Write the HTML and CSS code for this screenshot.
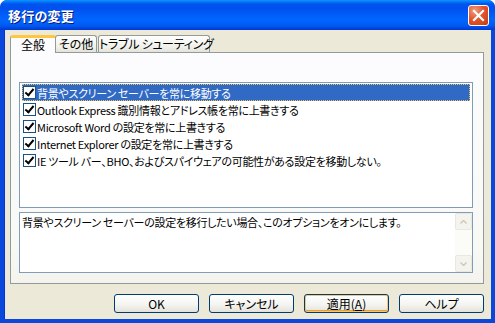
FILE: index.html
```html
<!DOCTYPE html>
<html lang="ja">
<head>
<meta charset="utf-8">
<link rel="stylesheet" href="styles.css">
</head>
<body>
<div class="window">
  <div class="titlebar">
    <span class="title">移行の変更</span>
    <button class="close" aria-label="閉じる">
      <svg width="13" height="13" viewBox="0 0 13 13"><path d="M2 2 L11 11 M11 2 L2 11" stroke="#fff" stroke-width="2.2" stroke-linecap="square"/></svg>
    </button>
  </div>
  <div class="client">
    <div class="tabs">
      <div class="tab active">全般</div>
      <div class="tab">その他</div>
      <div class="tab">トラブル シューティング</div>
    </div>
    <div class="panel">
      <ul class="list">
        <li class="item selected"><span class="cb checked"></span><span class="label">背景やスクリーン セーバーを常に移動する</span></li>
        <li class="item"><span class="cb checked"></span><span class="label">Outlook Express 識別情報とアドレス帳を常に上書きする</span></li>
        <li class="item"><span class="cb checked"></span><span class="label">Microsoft Word の設定を常に上書きする</span></li>
        <li class="item"><span class="cb checked"></span><span class="label">Internet Explorer の設定を常に上書きする</span></li>
        <li class="item"><span class="cb checked"></span><span class="label">IE ツール バー、BHO、およびスパイウェアの可能性がある設定を移動しない。</span></li>
      </ul>
      <div class="desc">
        <p class="desc-text">背景やスクリーン セーバーの設定を移行したい場合、このオプションをオンにします。</p>
        <div class="vscroll">
          <div class="sbtn"><svg width="7" height="4" viewBox="0 0 7 4"><path d="M0.5 3.5 L3.5 0.5 L6.5 3.5" fill="none" stroke="#C9C7BA" stroke-width="1.3"/></svg></div>
          <div class="strack"></div>
          <div class="sbtn"><svg width="7" height="4" viewBox="0 0 7 4"><path d="M0.5 0.5 L3.5 3.5 L6.5 0.5" fill="none" stroke="#C9C7BA" stroke-width="1.3"/></svg></div>
        </div>
      </div>
    </div>
    <div class="buttons">
      <button class="btn">OK</button>
      <button class="btn">キャンセル</button>
      <button class="btn default">適用(<u>A</u>)</button>
      <button class="btn">ヘルプ</button>
    </div>
  </div>
</div>
</body>
</html>
```
FILE: styles.css
```css
* { box-sizing: border-box; }
html, body { margin: 0; padding: 0; }
body {
  width: 495px;
  height: 323px;
  overflow: hidden;
  font-family: "Noto Sans CJK JP", "Noto Sans", sans-serif;
  font-size: 11px;
  font-feature-settings: "palt" 1;
  color: #000;
}
.window {
  width: 495px;
  height: 323px;
  display: flex;
  flex-direction: column;
  background: #0A48DB;
  border-radius: 7px 7px 0 0;
  overflow: hidden;
}
.titlebar {
  height: 30px;
  flex: none;
  display: flex;
  align-items: center;
  justify-content: space-between;
  padding: 0 6px 0 8px;
  background: linear-gradient(to bottom, #0997FF 0px, #0053EE 4px, #0050EE 8px, #0066FF 20px, #0058F0 26px, #003DD7 29px, #003DD7 30px);
  border-radius: 7px 7px 0 0;
}
.title {
  color: #fff;
  font-weight: bold;
  font-size: 13px;
  letter-spacing: 0.2px;
  font-feature-settings: normal;
  text-shadow: 1px 1px 0 #0A1883;
  margin-top: 1px;
}
.close {
  width: 21px;
  height: 21px;
  padding: 0;
  border: 1px solid #fff;
  border-radius: 3px;
  background: radial-gradient(circle at 30% 25%, #F09C7E 0%, #E2562D 45%, #C83A12 100%);
  display: flex;
  align-items: center;
  justify-content: center;
  margin-top: 1px;
}
.client {
  flex: 1;
  margin: 0 4px 4px 4px;
  background: #ECE9D8;
  border-left: 1px solid #0831D9;
  display: flex;
  flex-direction: column;
  padding: 5px 6px 0 5px;
}
.tabs {
  display: flex;
  height: 17px;
  align-items: flex-end;
  position: relative;
  z-index: 1;
}
.tab {
  height: 17px;
  padding: 0;
  border: 1px solid #919B9C;
  border-bottom: none;
  border-radius: 3px 3px 0 0;
  background: linear-gradient(to bottom, #FFFFFF, #F0F0EA 70%, #E4E2D9);
  line-height: 15px;
  white-space: nowrap;
  font-size: 12px;
  text-align: center;
}
.tab.active {
  width: 46px;
  height: 18px;
  background: #FCFCFE;
  border-top: 3px solid #FFC73C;
  line-height: 14px;
  margin-right: -1px;
  position: relative;
  margin-bottom: -1px;
  z-index: 2;
}
.tab:nth-child(2) { width: 42px; }
.tab:nth-child(3) { width: 112px; margin-left: 1px; letter-spacing: -0.3px; }
.panel {
  width: 474px;
  height: 232px;
  border: 1px solid #919B9C;
  background: linear-gradient(to bottom, #FCFCFE, #F8F8F5 85%, #F4F3EE);
  padding: 29px 10px 10px 8px;
  display: flex;
  flex-direction: column;
  gap: 4px;
}
.list {
  list-style: none;
  margin: 0;
  padding: 1px 2px 0 2px;
  height: 126px;
  flex: none;
  border: 1px solid #7F9DB9;
  background: #fff;
}
.item {
  height: 17px;
  display: flex;
  align-items: center;
  gap: 1px;
  white-space: nowrap;
  padding-left: 1px;
  font-size: 11px;
  letter-spacing: -0.3px;
}
.item.selected {
  background: #316AC5;
  color: #fff;
  outline: 1px dotted #F2C14E;
  outline-offset: -1px;
}
.cb {
  width: 13px;
  height: 13px;
  flex: none;
  border: 1px solid #1C5180;
  background: #fff;
  position: relative;
}
.cb.checked::after {
  content: "";
  position: absolute;
  left: 3px;
  top: 0px;
  width: 3px;
  height: 7px;
  border: solid #000;
  border-width: 0 2px 2px 0;
  transform: rotate(40deg);
}
.desc {
  flex: 1;
  display: flex;
  border: 1px solid #7F9DB9;
  background: #fff;
}
.desc-text {
  flex: 1;
  margin: 0;
  padding: 1px 2px;
  font-size: 11px;
  letter-spacing: -0.3px;
  line-height: 16px;
}
.vscroll {
  width: 17px;
  flex: none;
  display: flex;
  flex-direction: column;
  background: #FBFBF8;
}
.sbtn {
  height: 17px;
  border: 1px solid #E8E8DF;
  border-radius: 2px;
  background: #F4F3EE;
  display: flex;
  align-items: center;
  justify-content: center;
}
.strack { flex: 1; }
.buttons {
  display: flex;
  justify-content: flex-end;
  gap: 10px;
  padding-top: 10px;
  padding-right: 1px;
}
.btn {
  width: 85px;
  height: 19px;
  padding: 0;
  border: 1px solid #003C74;
  border-radius: 3px;
  background: linear-gradient(to bottom, #FFFFFF, #F3F3EF 60%, #E3E2DA);
  font-family: "Noto Sans CJK JP", "Noto Sans", sans-serif;
  font-feature-settings: "palt" 1;
  font-size: 12px;
  line-height: 15px;
  color: #000;
}
.btn.default {
  box-shadow: inset 0 0 0 1px #F9C86E, inset 0 -1px 0 1px #E5A03A;
}
```
